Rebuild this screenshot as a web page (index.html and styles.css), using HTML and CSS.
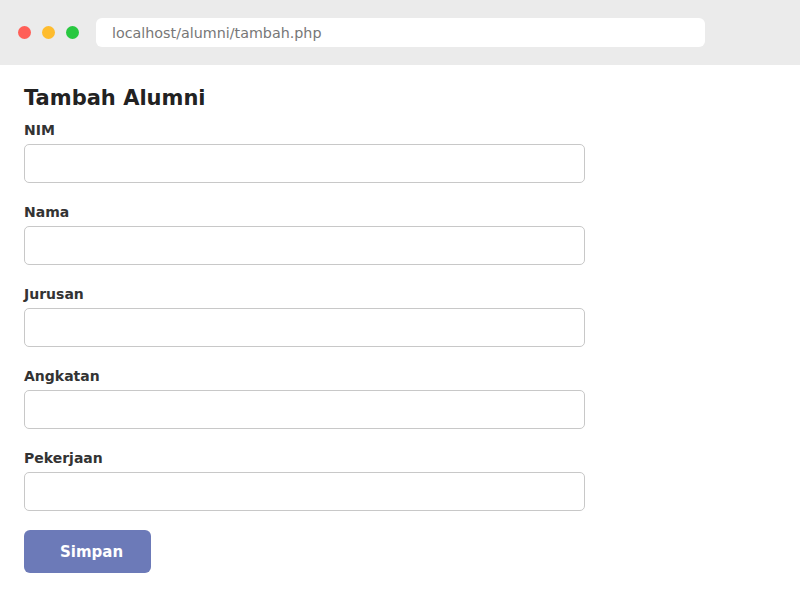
FILE: index.html
```html
<!DOCTYPE html>
<html lang="id">
<head>
  <meta charset="UTF-8" />
  <title>Tambah Alumni</title>
  <link rel="stylesheet" href="styles.css">
</head>
<body>

<!-- browser bar -->
<div class="browser-bar">
  <span class="dot red"></span>
  <span class="dot yellow"></span>
  <span class="dot green"></span>
  <div class="url">localhost/alumni/tambah.php</div>
</div>

<div class="page">
  <h1>Tambah Alumni</h1>

  <form class="form">
    <div class="field">
      <label for="nim">NIM</label>
      <input type="text" id="nim" name="nim">
    </div>
    <div class="field">
      <label for="nama">Nama</label>
      <input type="text" id="nama" name="nama">
    </div>
    <div class="field">
      <label for="jurusan">Jurusan</label>
      <input type="text" id="jurusan" name="jurusan">
    </div>
    <div class="field">
      <label for="angkatan">Angkatan</label>
      <input type="text" id="angkatan" name="angkatan">
    </div>
    <div class="field">
      <label for="pekerjaan">Pekerjaan</label>
      <input type="text" id="pekerjaan" name="pekerjaan">
    </div>
    <button type="submit" class="btn">Simpan</button>
  </form>
</div>

</body>
</html>
```

FILE: styles.css
```css
* {
  box-sizing: border-box;
  margin: 0;
  padding: 0;
}

body {
  font-family: 'DejaVu Sans', sans-serif;
  background: #fff;
  color: #222;
}

/* BROWSER BAR */
.browser-bar {
  height: 65px;
  background: #ebebeb;
  display: flex;
  align-items: center;
  padding-left: 18px;
}

.dot {
  width: 13px;
  height: 13px;
  border-radius: 50%;
  margin-right: 11px;
}

.dot.red { background: #ff5f57; }
.dot.yellow { background: #febc2e; }
.dot.green { background: #28c840; }

.url {
  margin-left: 6px;
  width: 609px;
  height: 29px;
  background: #fff;
  border-radius: 6px;
  padding-left: 16px;
  display: flex;
  align-items: center;
  font-size: 14.3px;
  color: #777;
}

/* FORM */
.page {
  padding: 21px 24px 18px;
}

h1 {
  font-size: 21px;
  line-height: 25px;
  font-weight: bold;
  color: #222;
  margin-bottom: 11px;
}

.field {
  margin-bottom: 21px;
}

.field:last-of-type {
  margin-bottom: 19px;
}

label {
  display: block;
  font-size: 14px;
  line-height: 17px;
  font-weight: bold;
  color: #333;
  margin-bottom: 5px;
}

input {
  display: block;
  width: 561px;
  height: 39px;
  border: 1px solid #c8c8c8;
  border-radius: 5px;
  font-size: 14px;
  padding: 0 10px;
}

.btn {
  width: 127px;
  height: 43px;
  border: none;
  border-radius: 6px;
  background: #6c7ab8;
  color: #fff;
  font-family: 'DejaVu Sans', sans-serif;
  font-size: 15px;
  font-weight: bold;
  text-align: left;
  padding-left: 36px;
  cursor: pointer;
}
```
